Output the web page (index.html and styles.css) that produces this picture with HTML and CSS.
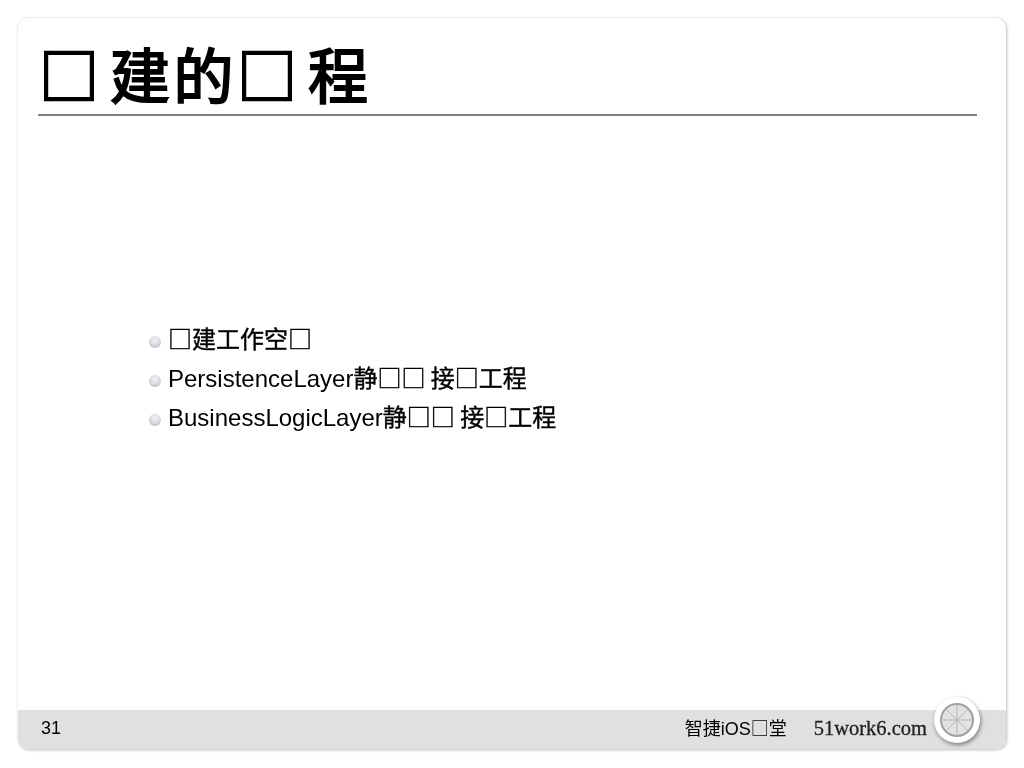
FILE: index.html
```html
<!DOCTYPE html>
<html lang="zh">
<head>
<meta charset="utf-8">
<title>□建的□程</title>
<link rel="stylesheet" href="styles.css">
</head>
<body>
<div class="slide">
  <header class="head">
    <h1 class="title cjk"><span class="wide">□</span><span class="tight">建的</span><span class="wide">□</span>程</h1>
  </header>
  <main class="body">
    <ul class="points">
      <li><span><span class="cjk">□建工作空□</span></span></li>
      <li><span>PersistenceLayer<span class="cjk">静□□ 接□工程</span></span></li>
      <li><span>BusinessLogicLayer<span class="cjk">静□□ 接□工程</span></span></li>
    </ul>
  </main>
  <footer class="foot">
    <span class="num">31</span>
    <span class="brand"><span class="cjk">智捷</span>iOS<span class="cjk">□堂</span></span>
    <span class="site">51work6.com</span>
    <svg class="wheel" width="52" height="52" viewBox="0 0 52 52" aria-hidden="true">
      <circle class="w-outer" cx="26" cy="26" r="23"/>
      <circle class="w-inner" cx="26" cy="26" r="16"/>
      <path class="w-spoke" d="M26 10V42M10 26H42M14.700 14.700L37.300 37.300M37.300 14.700L14.700 37.300"/>
    </svg>
  </footer>
</div>
</body>
</html>
```
FILE: styles.css
```css
html, body { margin: 0; padding: 0; background: #fff; }
body {
  width: 1024px;
  height: 768px;
  padding: 18px 18px 19px;
  box-sizing: border-box;
  font-family: "Liberation Sans", "Noto Sans CJK SC", sans-serif;
  color: #000;
  overflow: hidden;
}
.cjk { font-family: "Noto Sans CJK SC", sans-serif; }
.slide {
  height: 100%;
  display: flex;
  flex-direction: column;
  background: #fff;
  border-radius: 10px;
  box-shadow: 0 0 2px #d8d8d8, 1px 1px 3px #bbb;
  opacity: .999;
}
.head { padding: 0 29px 0 20px; }
.title {
  margin: 0;
  height: 98px;
  box-sizing: border-box;
  padding: 15px 0 0 1px;
  font-size: 60px;
  line-height: 80px;
  font-weight: 400;
  -webkit-text-stroke: 2px #000;
  letter-spacing: 6px;
  border-bottom: 2px solid #808080;
}
.wide { letter-spacing: 11px; }
.tight { letter-spacing: 3.500px; }
.body {
  flex: 1;
  display: flex;
  flex-direction: column;
  justify-content: center;
  padding-bottom: 70px;
}
.points {
  list-style: none;
  margin: 0;
  padding: 0 0 0 131px;
}
.points li {
  display: flex;
  align-items: center;
  gap: 7px;
  height: 39px;
  font-size: 24px;
  line-height: 30px;
  white-space: pre;
}
.points .cjk { -webkit-text-stroke: .4px #000; }
.points li::before {
  content: "";
  width: 12px;
  height: 12px;
  margin-top: 6px;
  flex: none;
  border-radius: 50%;
  background: radial-gradient(circle at 50% 35%, #f4f4f8 0, #d4d6dc 55%, #a8a8ae 100%);
}
.foot {
  height: 39px;
  box-sizing: border-box;
  padding: 0 24px 3px 23px;
  flex: none;
  display: flex;
  align-items: center;
  background: #e0e0e0;
  border-radius: 0 0 10px 10px;
  position: relative;
}
.num { font-size: 18px; margin-right: auto; }
.brand { font-size: 18px; line-height: 24px; margin-right: 27px; }
.site {
  font-family: "Liberation Serif", serif;
  font-size: 20.500px;
  margin-right: 55px;
  color: #222;
  -webkit-text-stroke: .3px #222;
}
.wheel {
  position: absolute;
  right: 23px;
  top: -16px;
  filter: drop-shadow(1px 2px 2px rgba(0,0,0,.45));
}
.w-outer { fill: #fff; }
.w-inner { fill: #e2e2e2; stroke: #a0a0a0; stroke-width: 2; }
.w-spoke { fill: none; stroke: #b4b4b4; stroke-width: 1; }
```
